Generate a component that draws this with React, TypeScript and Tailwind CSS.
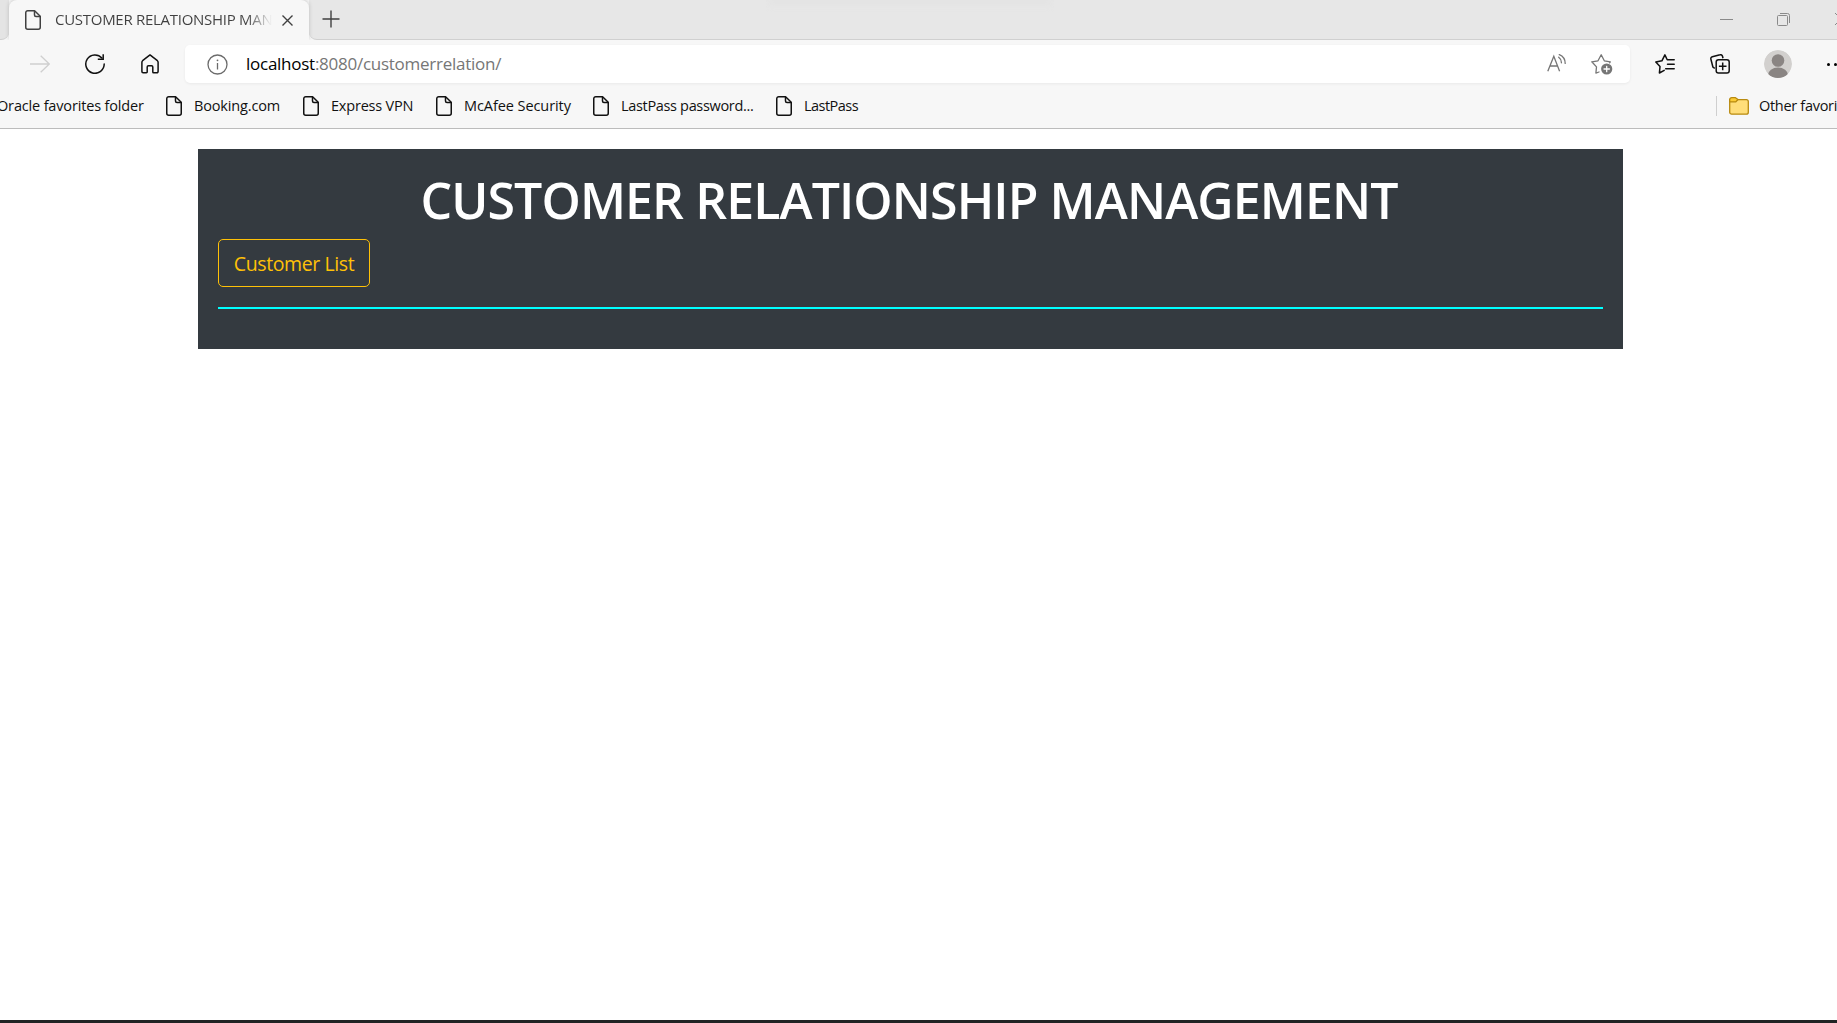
import React from 'react';

function FileIcon({ className = '' }: { className?: string }) {
  return (
    <svg width="16" height="20" viewBox="0 0 16 20" fill="none" stroke="currentColor" strokeWidth="1.5" strokeLinejoin="round" className={'shrink-0 ' + className}>
      <path d="M2.75 .75H9.6L15.25 6.3V17.25a2 2 0 0 1-2 2H2.75a2 2 0 0 1-2-2V2.75a2 2 0 0 1 2-2Z" />
      <path d="M9.5 1V5a1.5 1.5 0 0 0 1.5 1.5h4" />
    </svg>
  );
}

const bookmarks = [
  { label: 'Booking.com', item: 'w-[137px]', text: 'tracking-[-0.15px]' },
  { label: 'Express VPN', item: 'w-[133px]', text: 'tracking-[-0.2px]' },
  { label: 'McAfee Security', item: 'w-[157px]', text: 'tracking-[-0.08px]' },
  { label: 'LastPass password...', item: 'w-[183px]', text: 'tracking-[-0.33px]' },
  { label: 'LastPass', item: 'w-[90px]', text: 'tracking-[-0.52px]' },
];

function TabStrip() {
  return (
    <div className="relative flex h-10 bg-[#f7f7f7]">
      <div className="h-10 w-[9px] shrink-0 rounded-br-lg border-b border-[#d0d0d0] bg-[#e4e4e4]" />
      <div className="z-10 flex h-10 w-[300px] shrink-0 items-start rounded-t-lg bg-[#f7f7f7] shadow-[0_-1px_4px_rgba(0,0,0,0.18)] [clip-path:inset(-6px_-6px_0_-6px)]">
        <FileIcon className="mt-[10px] ml-4 text-[#404040]" />
        <div className="mt-[7px] ml-[14px] w-[217px] shrink-0 overflow-hidden bg-linear-to-r from-[#404040] from-88% to-transparent bg-clip-text text-[15px] leading-[24px] tracking-[-0.28px] whitespace-nowrap text-transparent">
          CUSTOMER RELATIONSHIP MAN
        </div>
        <svg width="11" height="11" viewBox="0 0 11 11" stroke="#404040" strokeWidth="1.4" className="mt-[15px] ml-[10px] shrink-0">
          <path d="M.5 .5L10.5 10.5M10.5 .5L.5 10.5" />
        </svg>
      </div>
      <div className="flex h-10 grow items-start overflow-hidden rounded-bl-lg border-b border-[#d0d0d0] bg-[#e7e7e7]">
        <svg width="18" height="18" viewBox="0 0 18 18" stroke="#404040" strokeWidth="1.4" className="mt-[10px] ml-[13px] shrink-0">
          <path d="M9 .5V17.5M.5 9H17.5" />
        </svg>
        <svg width="13" height="2" viewBox="0 0 13 2" className="mt-[19px] mr-[44px] ml-auto shrink-0">
          <path d="M0 .5H13" stroke="#8a8a8a" />
        </svg>
        <svg width="13" height="13" viewBox="0 0 13 13" fill="none" stroke="#8a8a8a" className="mt-[13px] mr-[45px] shrink-0">
          <rect x=".5" y="2.5" width="10" height="10" rx="1" />
          <path d="M3 .5H10.5a2 2 0 0 1 2 2V10" />
        </svg>
        <svg width="2" height="12" viewBox="0 0 2 12" stroke="#8a8a8a" className="mt-[13px] shrink-0">
          <path d="M0 0L6 6L0 12" fill="none" />
        </svg>
      </div>
      <div className="absolute top-0 left-[770px] h-2 w-[280px] bg-linear-to-b from-[#e1e1e1] to-[#e7e7e7] blur-[2px]" />
    </div>
  );
}

function Toolbar() {
  return (
    <div className="flex h-12 items-center">
      <svg width="20" height="18" viewBox="0 0 20 18" fill="none" stroke="#cfcfcf" strokeWidth="1.3" className="ml-[30px] shrink-0">
        <path d="M0 9H19.3M10.7 .7L19.3 9L10.7 17.3" />
      </svg>
      <svg width="20" height="20" viewBox="0 0 20 20" fill="none" stroke="#111" strokeWidth="1.5" className="ml-[35px] shrink-0">
        <path d="M19.2 10A9.2 9.2 0 1 1 16.9 4" strokeLinecap="round" />
        <path d="M18.2 .2V5.3H12.8" />
      </svg>
      <svg width="18" height="20" viewBox="0 0 18 20" fill="none" stroke="#111" strokeWidth="1.5" strokeLinejoin="round" className="ml-[36px] shrink-0">
        <path d="M.9 8.2a2 2 0 0 1 .7-1.5L9 .9l7.4 5.8a2 2 0 0 1 .7 1.5V17.5a1.2 1.2 0 0 1-1.2 1.2H12.6a.8.8 0 0 1-.8-.8V13a1.2 1.2 0 0 0-1.2-1.2H7.4A1.2 1.2 0 0 0 6.2 13v4.9a.8.8 0 0 1-.8.8H2.1A1.2 1.2 0 0 1 .9 17.5Z" />
      </svg>
      <div className="ml-[26px] flex h-[38px] w-[1445px] shrink-0 items-center rounded-[5px] bg-white shadow-[0_1px_3px_rgba(0,0,0,0.06)]">
        <svg width="21" height="21" viewBox="0 0 21 21" fill="none" stroke="#6b6b6b" strokeWidth="1.3" className="ml-[22px] shrink-0">
          <circle cx="10.5" cy="10.5" r="9.5" />
          <path d="M10.5 9V15.5" />
          <circle cx="10.5" cy="6.3" r=".9" fill="#6b6b6b" stroke="none" />
        </svg>
        <div className="ml-[18px] text-[17px] leading-6 tracking-[-0.26px] whitespace-nowrap text-[#767676]">
          <span className="text-black">localhost</span>:8080/customerrelation/
        </div>
        <svg width="20" height="18" viewBox="0 0 20 18" fill="none" stroke="#767676" strokeWidth="1.3" className="mr-[24px] mb-[3px] ml-auto shrink-0">
          <path d="M.8 17.2L6.8 2.3L12.6 17.2M3 12H10.5" />
          <path d="M11.7 3.2a6.5 6.5 0 0 1 2.7 5.6M12.3 .6a9.5 9.5 0 0 1 5.900 8.800" strokeLinecap="round" />
        </svg>
        <svg width="22" height="21" viewBox="0 0 22 21" fill="none" stroke="#767676" strokeWidth="1.3" strokeLinejoin="round" strokeLinecap="round" className="mr-[17px] shrink-0">
          <path d="M8 18L4.9 19.1L5.5 12.9L.8 7.8L7 6.8L10.2 .8L13.3 6.8L19.3 7.9L18.6 8.7" />
          <circle cx="15.7" cy="15" r="5.6" fill="#767676" stroke="none" />
          <path d="M15.7 12.3V17.7M13 15H18.4" stroke="white" strokeWidth="1.3" />
        </svg>
      </div>
      <svg width="20" height="20" viewBox="0 0 20 20" fill="none" stroke="#111" strokeWidth="1.5" strokeLinejoin="round" strokeLinecap="round" className="ml-[25px] shrink-0">
        <path d="M9.2 16.3L4.4 19L5 12.6L.8 8L6.9 6.8L9.9 .9L12.2 5.8H19.2M12.5 10.3H19.2M10.7 14.8H19.2" />
      </svg>
      <svg width="20" height="20" viewBox="0 0 20 20" fill="none" stroke="#111" strokeWidth="1.5" className="ml-[35px] shrink-0">
        <path d="M4.8 14.3L2.9 13L.9 5.2A2 2 0 0 1 2.3 2.7L10 .8a2 2 0 0 1 2.5 1.4L13 4.2" />
        <rect x="6.2" y="5.7" width="13" height="13.3" rx="2.3" />
        <path d="M12.7 8.5V16.2M8.9 12.35H16.5" />
      </svg>
      <svg width="28" height="28" viewBox="0 0 28 28" className="ml-[34px] shrink-0">
        <clipPath id="avatar"><circle cx="14" cy="14" r="14" /></clipPath>
        <g clipPath="url(#avatar)">
          <circle cx="14" cy="14" r="14" fill="#d2d0ce" />
          <circle cx="14" cy="10.5" r="6.3" fill="#8a8583" />
          <path d="M4 25a10 7.5 0 0 1 20 0a14 14 0 0 1-20 0Z" fill="#8a8583" />
        </g>
      </svg>
      <div className="ml-[35px] flex shrink-0 gap-[4px]">
        <i className="size-[3px] rounded-full bg-black" />
        <i className="size-[3px] rounded-full bg-black" />
      </div>
    </div>
  );
}

function BookmarksBar() {
  return (
    <div className="flex h-[41px] items-start border-b border-[#bcbcbc] text-[14.5px] leading-6 whitespace-nowrap text-[#111]">
      <div className="-ml-[3px] w-[169px] shrink-0 pt-[6px] tracking-[-0.16px]">Oracle favorites folder</div>
      {bookmarks.map((b) => (
        <div key={b.label} className={'flex shrink-0 gap-3 ' + b.item}>
          <FileIcon className="mt-2" />
          <span className={'pt-[6px] ' + b.text}>{b.label}</span>
        </div>
      ))}
      <div className="mt-2 ml-auto h-5 w-px shrink-0 bg-[#cfcfcf]" />
      <svg width="20" height="18" viewBox="0 0 20 18" stroke="#b88a10" strokeWidth="1.3" className="mt-[9px] ml-[12px] shrink-0">
        <path d="M.7 2.6H17.3a2 2 0 0 1 2 2V15.2a2 2 0 0 1-2 2H2.700a2 2 0 0 1-2-2Z" fill="#ffde7a" />
        <path d="M.7 5V2.7a2 2 0 0 1 2-2H6.500L9 2.500L6.800 4.900H.7" fill="#fbcb35" strokeLinejoin="round" />
      </svg>
      <div className="ml-[10px] w-[78px] shrink-0 pt-[6px] tracking-[-0.3px]">Other favori</div>
    </div>
  );
}

export default function App() {
  return (
    <div className="flex h-[1023px] w-[1837px] flex-col overflow-hidden bg-white font-['Open_Sans','Noto_Sans',sans-serif]">
      <header className="shrink-0 bg-[#f7f7f7]">
        <TabStrip />
        <Toolbar />
        <BookmarksBar />
      </header>
      <main className="grow border-b-[3px] border-[#202424] pt-5">
        <section className="ml-[198px] h-[200px] w-[1425px] bg-[#343a40] px-5 pt-5">
          <h1 className="h-[70px] pt-[1px] pr-[3px] text-center text-[50px] leading-[60px] font-semibold tracking-[-0.9px] whitespace-nowrap text-white">
            CUSTOMER RELATIONSHIP MANAGEMENT
          </h1>
          <button className="block h-12 w-[152px] rounded-[5px] border border-[#ffc107] pt-px text-center text-[19.5px] leading-[46px] tracking-[-0.4px] whitespace-nowrap text-[#ffc107]">
            Customer List
          </button>
          <hr className="mt-5 border-t-2 border-[#00ffff]" />
        </section>
      </main>
    </div>
  );
}
